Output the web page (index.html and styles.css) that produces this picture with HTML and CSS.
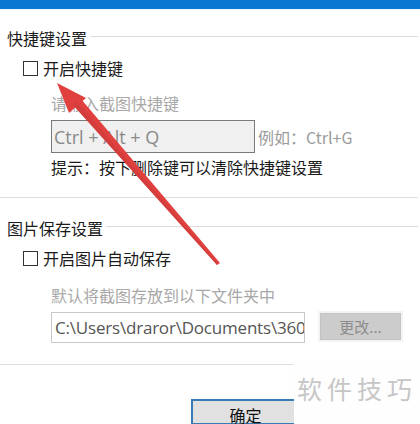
FILE: index.html
```html
<!DOCTYPE html>
<html lang="zh-CN">
<head>
<meta charset="utf-8">
<title>截图设置</title>
<link rel="stylesheet" href="styles.css">
</head>
<body>
<div class="window">
  <div class="titlebar"></div>

  <section class="group group-hotkey">
    <div class="legend"><span class="legend-text">快捷键设置</span><span class="rule"></span></div>
    <label class="check-row"><span class="checkbox"></span><span>开启快捷键</span></label>
    <div class="sub">
      <div class="hint">请输入截图快捷键</div>
      <div class="field-row">
        <div class="field field-gray">Ctrl + Alt + Q</div>
        <span class="example">例如：Ctrl+G</span>
      </div>
      <div class="tip">提示：按下删除键可以清除快捷键设置</div>
    </div>
  </section>

  <div class="separator"></div>

  <section class="group group-save">
    <div class="legend"><span class="legend-text">图片保存设置</span><span class="rule"></span></div>
    <label class="check-row"><span class="checkbox"></span><span>开启图片自动保存</span></label>
    <div class="sub">
      <div class="hint hint2">默认将截图存放到以下文件夹中</div>
      <div class="path-row">
        <div class="field field-white"><span class="path-text">C:\Users\draror\Documents\360截图</span></div>
        <div class="btn-change">更改...</div>
      </div>
    </div>
  </section>

  <div class="separator separator-bottom"></div>

  <div class="footer">
    <div class="btn-ok">确定</div>
  </div>

  <div class="watermark">软件技巧</div>

  <svg class="arrow" width="420" height="424" viewBox="0 0 420 424">
    <polygon points="57,83 69,113 86,98" fill="#e0413f"/>
    <polygon points="73,105 81,99 220,263 217,265" fill="#e0413f"/>
    <polygon points="73,105 77,102 218,264 217,265" fill="#c93a3a" opacity="0.6"/>
  </svg>
</div>
</body>
</html>
```

FILE: styles.css
```css
html, body {
  margin: 0;
  padding: 0;
  background: #ffffff;
}

body {
  font-family: "Noto Sans CJK SC", "Noto Sans", sans-serif;
  font-size: 16px;
  line-height: 16px;
  color: #1a1a1a;
}

.window {
  position: relative;
  width: 420px;
  height: 424px;
  overflow: hidden;
  background: #ffffff;
}

.titlebar {
  height: 9px;
  background: #0a78d2;
  border-bottom: 1px solid #eef7ff;
}

.group {
  padding-left: 7px;
}

.group-hotkey {
  padding-top: 20px;
}

.group-save {
  padding-top: 22px;
}

.legend {
  display: flex;
  align-items: flex-start;
  height: 16px;
}

.legend-text {
  white-space: nowrap;
}

.rule {
  flex: 1;
  height: 1px;
  margin-top: 6px;
  margin-left: 3px;
  margin-right: 2px;
  background: #dcdcdc;
}

.check-row {
  display: flex;
  align-items: flex-start;
  gap: 5px;
  margin-top: 14px;
  margin-left: 16px;
  height: 16px;
}

.checkbox {
  display: block;
  width: 13px;
  height: 13px;
  margin-top: 1px;
  border: 1px solid #333333;
  background: #ffffff;
  flex: none;
}

.sub {
  padding-left: 44px;
}

.hint {
  margin-top: 19px;
  color: #a8a8a8;
}

.hint2 {
  margin-top: 21px;
}

.field-row {
  display: flex;
  align-items: center;
  margin-top: 9px;
  gap: 3px;
}

.field {
  box-sizing: border-box;
  height: 33px;
  display: flex;
  align-items: center;
  font-family: "Open Sans", "Noto Sans", sans-serif;
  font-size: 18px;
  white-space: nowrap;
  overflow: hidden;
}

.field-gray {
  width: 204px;
  padding-left: 2px;
  background: #f0f0f0;
  border: 1px solid #7a7a7a;
  color: #8a8a8a;
}

.example {
  color: #9a9a9a;
  white-space: nowrap;
}

.tip {
  margin-top: 6px;
  color: #1a1a1a;
}

.separator {
  height: 1px;
  background: #dedede;
  margin-top: 22px;
  margin-right: 2px;
}

.path-row {
  display: flex;
  align-items: flex-start;
  margin-top: 9px;
  gap: 15px;
}

.field-white {
  width: 254px;
  height: 31px;
  padding-left: 3px;
  background: #ffffff;
  border: 1px solid #c8c8c8;
  color: #555555;
  font-size: 17px;
  letter-spacing: -0.2px;
}

.path-text {
  white-space: nowrap;
}

.btn-change {
  box-sizing: border-box;
  width: 81px;
  height: 27px;
  margin-top: 1px;
  display: flex;
  align-items: center;
  justify-content: center;
  background: #cccccc;
  border: 1px solid #c4c4c4;
  color: #8c8c8c;
  font-size: 15px;
  outline: 2px solid #f4f4f4;
  flex: none;
}

.separator-bottom {
  margin-top: 21px;
  width: 295px;
}

.footer {
  padding-top: 34px;
  padding-left: 191px;
}

.btn-ok {
  box-sizing: border-box;
  width: 112px;
  height: 26px;
  border: 2px solid #3b7db3;
  background: #e1e1e1;
  color: #111111;
  text-align: center;
  padding-top: 6px;
  padding-right: 3px;
}

.watermark {
  position: absolute;
  left: 294px;
  top: 362px;
  width: 126px;
  height: 62px;
  background: #fefefe;
  color: #c6c6c6;
  font-size: 25px;
  line-height: 25px;
  letter-spacing: 5px;
  padding-top: 14px;
  padding-left: 3px;
  box-sizing: border-box;
  white-space: nowrap;
}

.arrow {
  position: absolute;
  left: 0;
  top: 0;
  pointer-events: none;
}
```
